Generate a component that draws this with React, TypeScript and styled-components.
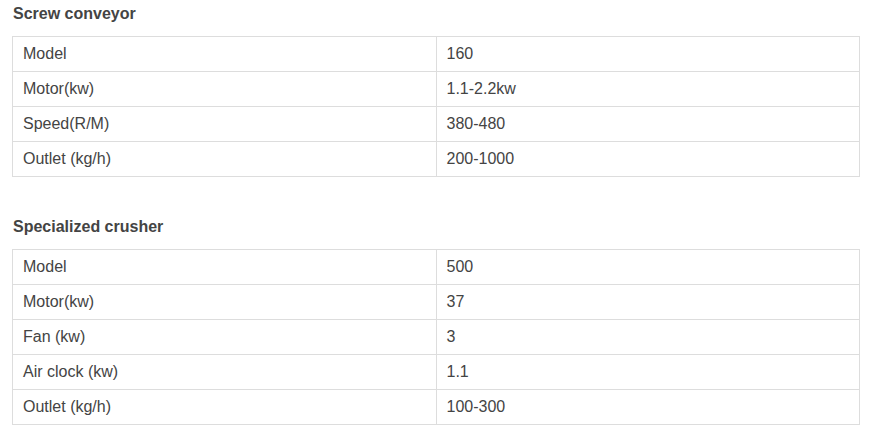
import React from 'react';
import styled, {createGlobalStyle} from 'styled-components';

const GlobalStyle = createGlobalStyle`
  html, body {
    margin: 0;
    padding: 0;
    background: #ffffff;
    font-family: "Liberation Sans", Arial, sans-serif;
  }
`;

const Page = styled.div`
  width: 848px;
  padding: 4px 0 0 12px;
  display: flex;
  flex-direction: column;
  gap: 40px;
`;

const Section = styled.section`
  display: flex;
  flex-direction: column;
  gap: 12px;
`;

const Title = styled.h3`
  margin: 0 0 0 1px;
  font-size: 16px;
  line-height: 20px;
  font-weight: 700;
  color: #444;
`;

const Table = styled.table`
  width: 100%;
  border-collapse: collapse;
  table-layout: fixed;

  & td {
    border: 1px solid #ddd;
    height: 35px;
    padding: 0 10px;
    font-size: 16px;
    color: #444;
    box-sizing: border-box;
  }
`;

type Spec = [string, string];

const screw: Spec[] = [
  ['Model', '160'],
  ['Motor(kw)', '1.1-2.2kw'],
  ['Speed(R/M)', '380-480'],
  ['Outlet (kg/h)', '200-1000'],
];

const crusher: Spec[] = [
  ['Model', '500'],
  ['Motor(kw)', '37'],
  ['Fan (kw)', '3'],
  ['Air clock (kw)', '1.1'],
  ['Outlet (kg/h)', '100-300'],
];

const SpecTable: React.FC<{title: string; rows: Spec[]}> = ({title, rows}) => (
  <Section>
    <Title>{title}</Title>
    <Table>
      <tbody>
        {rows.map(([label, value]) => (
          <tr key={label}>
            <td>{label}</td>
            <td>{value}</td>
          </tr>
        ))}
      </tbody>
    </Table>
  </Section>
);

const App: React.FC = () => (
  <>
    <GlobalStyle/>
    <Page>
      <SpecTable title={'Screw conveyor'} rows={screw}/>
      <SpecTable title={'Specialized crusher'} rows={crusher}/>
    </Page>
  </>
);

export default App;
